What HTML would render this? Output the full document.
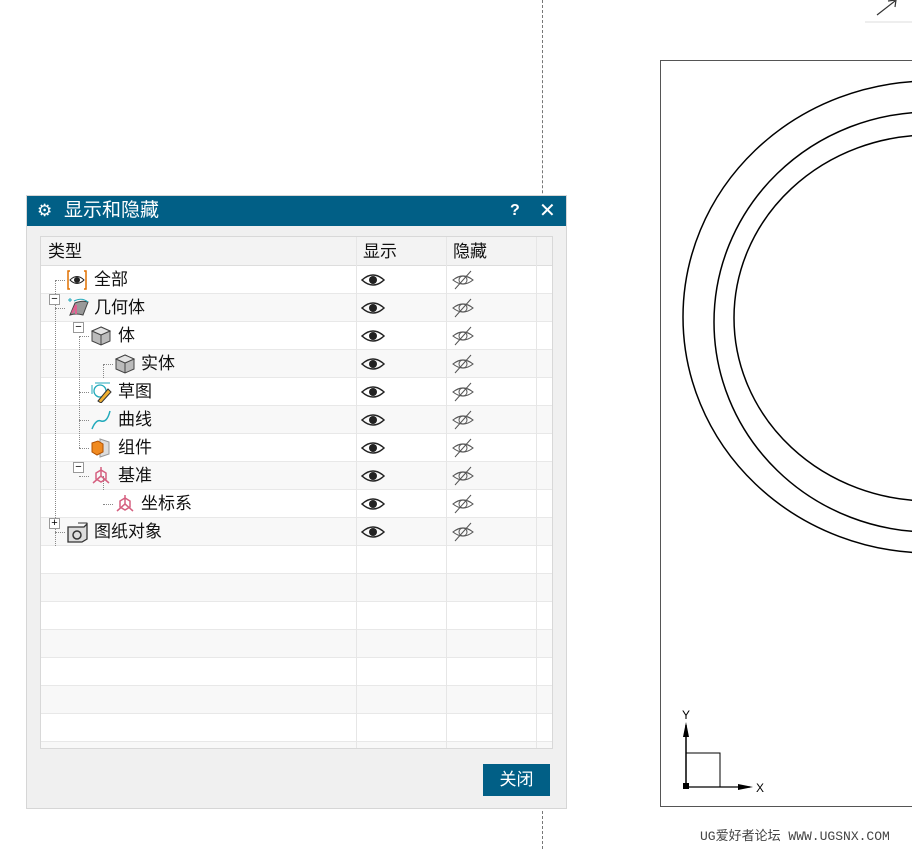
<!DOCTYPE html>
<html><head><meta charset="utf-8"><style>
*{margin:0;padding:0;box-sizing:border-box}
body{width:912px;height:849px;background:#fff;position:relative;overflow:hidden;font-family:"Liberation Sans","Noto Sans CJK SC",sans-serif}
.a{position:absolute}
.dlg{left:26px;top:195px;width:541px;height:614px;background:#f0f0f0;border:1px solid #d6d6d6}
.title{left:0;top:0;width:539px;height:30px;background:#015f86;color:#fff;font-size:19px;line-height:30px}
.box{left:13px;top:40px;width:513px;height:513px;background:#fff;border:1px solid #d8d8d8;overflow:hidden}
.row{position:absolute;left:0;width:511px;height:28px;border-bottom:1px solid #e8e8e8}
.vl{position:absolute;top:0;width:1px;height:513px;background:#e6e6e6}
.t{position:absolute;font-size:17px;color:#111;line-height:28px}
.eye{position:absolute;left:320px}
.hid{position:absolute;left:409px}
.pm{position:absolute;width:11px;height:11px;border:1px solid #999;background:#fff;font-size:11px;line-height:9px;text-align:center;color:#000}
.dv{position:absolute;border-left:1px dotted #888}
.dh{position:absolute;border-top:1px dotted #888}
</style></head><body>
<div class="a" style="left:542px;top:0;height:849px;border-left:1px dashed #777"></div>
<svg class="a" style="left:0;top:0" width="912" height="849">
<path d="M877 15 L895 1 M888 1 L896 0 L895 7" stroke="#333" fill="none" stroke-width="1.2"/>
<line x1="865" y1="22" x2="912" y2="22" stroke="#ddd"/>
<rect x="660.5" y="60.5" width="260" height="746" fill="none" stroke="#555"/>
<ellipse cx="930" cy="317" rx="247" ry="236" fill="none" stroke="#000" stroke-width="1.5"/>
<ellipse cx="930" cy="322" rx="216" ry="210" fill="none" stroke="#000" stroke-width="1.5"/>
<ellipse cx="930" cy="318" rx="196" ry="183" fill="none" stroke="#000" stroke-width="1.5"/>
<line x1="686" y1="787" x2="686" y2="725" stroke="#000" stroke-width="1.5"/>
<path d="M683 737 L686 722 L689 737Z" fill="#000"/>
<line x1="686" y1="787" x2="750" y2="787" stroke="#000" stroke-width="1.2"/>
<path d="M738 784 L753 787 L738 790Z" fill="#000"/>
<path d="M686 753 H720 V787" fill="none" stroke="#000"/>
<rect x="683" y="783" width="6" height="6" fill="#000"/>
<text x="682" y="719" font-size="12" font-family="Liberation Sans">Y</text>
<text x="756" y="792" font-size="12" font-family="Liberation Sans">X</text>
<text x="700" y="840" font-size="13" fill="#444" font-family="Liberation Mono,Noto Sans CJK SC,monospace">UG爱好者论坛 WWW.UGSNX.COM</text>
</svg>
<div class="a dlg">
<div class="a title"><span style="position:absolute;left:10px;font-size:17px">⚙</span><span style="position:absolute;left:37px">显示和隐藏</span><span style="position:absolute;left:483px;font-weight:bold;font-size:16px">?</span><span style="position:absolute;left:512px;font-size:20px">✕</span></div>
<div class="a box">
<div class="row" style="top:0;height:29px;background:#f3f3f3;border-bottom:1px solid #ddd"></div>
<div class="vl" style="left:315px"></div><div class="vl" style="left:405px"></div><div class="vl" style="left:495px"></div>
<span class="t" style="left:7px;top:1px">类型</span><span class="t" style="left:322px;top:1px">显示</span><span class="t" style="left:412px;top:1px">隐藏</span>
</div>
<div class="a" style="left:456px;top:568px;width:67px;height:32px;background:#015f86;color:#fff;font-size:17px;line-height:32px;text-align:center">关闭</div>
</div>
<script>
var box=document.querySelector('.box'),h='';
for(var i=0;i<18;i++){h+='<div class="row" style="top:'+(29+28*i)+'px;background:'+(i%2?'#f8f8f8':'#fff')+'"></div>';}
var cube='<svg width="22" height="22"><path d="M11 2 L20 6 L20 16 L11 20 L2 16 L2 6Z" fill="#bbb" stroke="#444"/><path d="M2 6 L11 10 L20 6 M11 10 V20" fill="none" stroke="#444"/><path d="M11 2 L20 6 L11 10 L2 6Z" fill="#e4e4e4" stroke="#444"/></svg>';
var datum='<svg width="22" height="22" stroke="#d56080" fill="none" stroke-width="1.5"><path d="M11 2 V11 L3 18 M11 11 L19 18 M6 8 L11 5 L16 8 L16 14 L11 17 L6 14Z"/></svg>';
var icons=[
'<svg width="22" height="22"><path d="M4 2 H2 V20 H4 M18 2 H20 V20 H18" stroke="#e07000" fill="none" stroke-width="1.5"/><path d="M4 11 Q11 4 18 11 Q11 18 4 11Z" fill="none" stroke="#222"/><circle cx="11" cy="11" r="3" fill="#222"/></svg>',
'<svg width="24" height="22"><path d="M4 18 L9 6 Q16 3 22 5 L17 18 Q10 16 4 18Z" fill="#999" stroke="#444"/><path d="M6 16 L10 8 L10 17" stroke="#e06090" fill="none" stroke-width="2"/><path d="M2 3 H6 M4 1 V5" stroke="#2ab" /><path d="M8 4 Q16 0 22 5" stroke="#2ab" fill="none"/></svg>',
cube,cube,
'<svg width="22" height="22"><circle cx="10" cy="10" r="6" fill="none" stroke="#2ab" stroke-width="1.3"/><path d="M2 4 V13 M5 2 H20" stroke="#2ab"/><path d="M8 20 L18 8 L21 11 L11 22Z" fill="#f0b030" stroke="#333"/></svg>',
'<svg width="22" height="22"><path d="M2 20 Q6 10 11 12 Q17 14 20 2" fill="none" stroke="#2ab" stroke-width="1.5"/></svg>',
'<svg width="22" height="22"><path d="M10 2 L19 5 V17 L10 20Z" fill="#ddd" stroke="#999"/><path d="M2 6 L8 4 L13 7 V15 L7 18 L2 15Z" fill="#f08a20" stroke="#b05000"/></svg>',
datum,datum,
'<svg width="24" height="22"><path d="M2 6 H18 L21 3 V18 L16 21 H2Z" fill="#ddd" stroke="#333" stroke-width="1.3"/><circle cx="11" cy="14" r="4" fill="none" stroke="#333" stroke-width="1.5"/><path d="M12 2 H21" stroke="#333"/></svg>'];
var items=[[26,53,'全部'],[26,53,'几何体'],[50,77,'体'],[74,100,'实体'],[50,77,'草图'],[50,77,'曲线'],[50,77,'组件'],[50,77,'基准'],[74,100,'坐标系'],[26,53,'图纸对象']];
var eye='<svg width="24" height="16"><path d="M1 8 Q12 -2 23 8 Q12 18 1 8Z" fill="none" stroke="#222" stroke-width="1.5"/><circle cx="12" cy="8" r="4" fill="#222"/></svg>';
var hid='<svg width="26" height="20"><path d="M3 10 Q13 2 23 10 Q13 18 3 10Z" fill="none" stroke="#555" stroke-width="1.1"/><circle cx="13" cy="10" r="4" fill="none" stroke="#555"/><line x1="5" y1="19" x2="21" y2="1" stroke="#555"/></svg>';
h+='<div class="dv" style="left:14px;top:43px;height:266px"></div><div class="dv" style="left:38px;top:99px;height:112px"></div><div class="dv" style="left:62px;top:127px;height:14px"></div><div class="dv" style="left:62px;top:239px;height:14px"></div>';
items.forEach(function(it,i){var y=29+28*i;
h+='<div class="dh" style="left:'+(it[0]-12)+'px;top:'+(y+14)+'px;width:10px"></div>';
h+='<div style="position:absolute;left:'+(it[0]-1)+'px;top:'+(y+3)+'px;width:24px;height:22px">'+icons[i]+'</div>';
h+='<span class="t" style="left:'+it[1]+'px;top:'+y+'px">'+it[2]+'</span>';
h+='<div class="eye" style="top:'+(y+6)+'px">'+eye+'</div><div class="hid" style="top:'+(y+4)+'px">'+hid+'</div>';});
[[8,57,'−'],[32,85,'−'],[32,225,'−'],[8,281,'+']].forEach(function(p){h+='<div class="pm" style="left:'+p[0]+'px;top:'+p[1]+'px">'+p[2]+'</div>';});
box.insertAdjacentHTML('afterbegin',h);
</script>
</body></html>
